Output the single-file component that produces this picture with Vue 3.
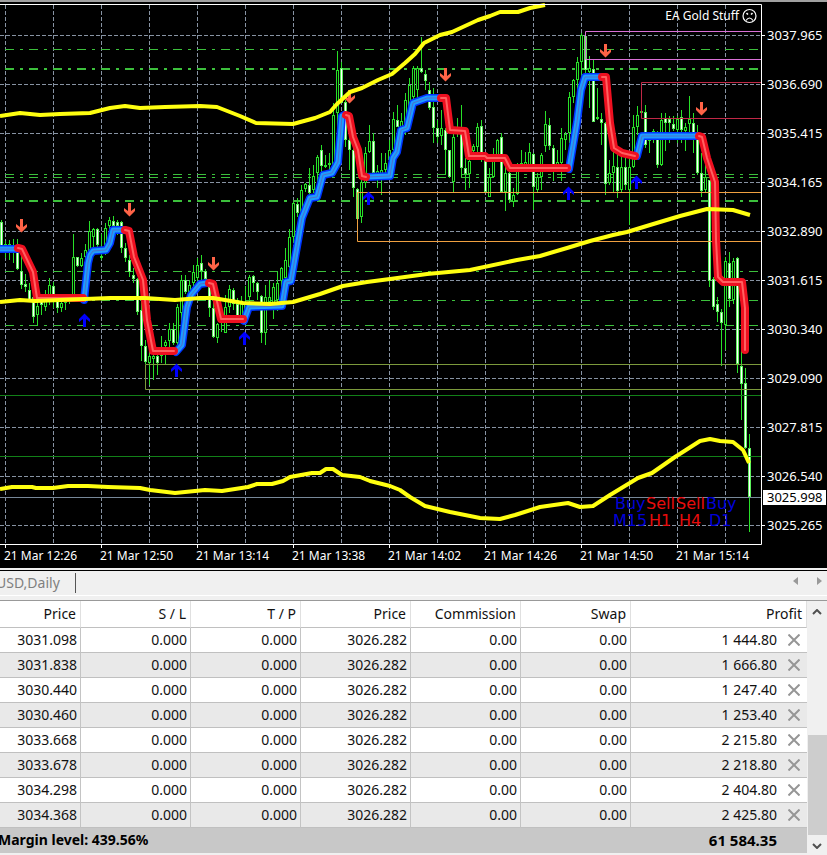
<script setup>
const gridX = Array.from({ length: 16 }, (_, i) => 5 + i * 48)

const prices = [
  '3037.965', '3036.690', '3035.415', '3034.165', '3032.890', '3031.615',
  '3030.340', '3029.090', '3027.815', '3026.540', '3025.265',
].map((label, i) => ({ label, y: 35 + i * 49 }))

const times = [
  '12:26', '12:50', '13:14', '13:38', '14:02', '14:26', '14:50', '15:14',
].map((t, i) => ({ label: `21 Mar ${t}`, x: 5 + i * 96 }))

// One bar every 4px: [high, low, body top, body bottom, falling]
const bars = [
  [220, 248, 222, 247, 1], [241, 258, 244, 250, 0], [240, 260, 244, 249, 0], [239, 263, 245, 250, 0],
  [239, 270, 250, 269, 1], [252, 289, 271, 285, 1], [274, 292, 284, 287, 1], [283, 302, 290, 300, 1],
  [294, 323, 297, 317, 1], [299, 326, 306, 315, 0], [297, 315, 301, 305, 1], [290, 311, 295, 307, 0],
  [278, 305, 285, 297, 0], [282, 308, 286, 299, 1], [295, 313, 301, 308, 1], [300, 312, 303, 308, 0],
  [298, 310, 301, 303, 0], [296, 304, 298, 300, 0], [234, 300, 257, 295, 0], [257, 267, 257, 266, 1],
  [253, 267, 258, 266, 0], [244, 260, 250, 257, 0], [221, 257, 231, 252, 0], [228, 250, 229, 237, 0],
  [228, 250, 229, 245, 1], [234, 260, 256, 258, 0], [223, 255, 228, 245, 0], [217, 238, 220, 226, 0],
  [216, 230, 221, 226, 1], [220, 235, 222, 226, 1], [221, 253, 222, 248, 1], [243, 262, 248, 258, 1],
  [255, 277, 260, 272, 1], [268, 283, 275, 279, 1], [278, 315, 279, 312, 1], [297, 361, 310, 346, 1],
  [340, 364, 346, 362, 1], [350, 385, 356, 363, 0], [348, 380, 356, 359, 0], [350, 375, 356, 363, 1],
  [336, 363, 348, 356, 0], [340, 364, 342, 346, 0], [323, 350, 329, 341, 0], [323, 345, 329, 343, 1],
  [304, 346, 307, 343, 0], [275, 323, 280, 313, 0], [275, 294, 280, 292, 1], [280, 303, 285, 295, 0],
  [265, 290, 272, 283, 0], [258, 290, 265, 278, 0], [255, 285, 263, 271, 1], [269, 284, 271, 279, 1],
  [283, 317, 287, 308, 1], [290, 338, 308, 337, 1], [323, 343, 324, 338, 0], [310, 332, 318, 323, 0],
  [295, 333, 307, 333, 0], [285, 313, 289, 307, 0], [288, 310, 290, 304, 1], [298, 322, 304, 317, 1],
  [296, 320, 304, 318, 0], [286, 314, 302, 311, 0], [275, 305, 277, 297, 0], [275, 292, 276, 283, 1],
  [282, 300, 283, 292, 1], [295, 343, 296, 333, 1], [285, 345, 297, 333, 0], [280, 307, 297, 302, 0],
  [283, 319, 287, 303, 0], [272, 311, 283, 300, 0], [267, 287, 268, 281, 0], [248, 280, 260, 278, 0],
  [229, 268, 237, 267, 0], [202, 243, 203, 237, 0], [198, 217, 204, 213, 1], [185, 215, 190, 212, 0],
  [183, 192, 184, 189, 0], [168, 203, 185, 193, 1], [165, 193, 176, 190, 0], [155, 187, 157, 173, 0],
  [145, 176, 150, 166, 1], [155, 168, 165, 167, 0], [153, 170, 163, 165, 0], [103, 170, 115, 166, 0],
  [51, 130, 70, 113, 0], [62, 103, 68, 103, 1], [100, 147, 102, 140, 1], [135, 170, 140, 150, 1],
  [147, 197, 150, 188, 1], [188, 220, 189, 219, 1], [177, 223, 182, 217, 0], [147, 188, 153, 183, 0],
  [125, 153, 141, 152, 0], [133, 176, 141, 173, 1], [165, 188, 171, 174, 0], [153, 195, 170, 176, 0],
  [153, 173, 163, 170, 0], [140, 173, 150, 160, 0], [112, 153, 119, 150, 0], [105, 127, 120, 127, 1],
  [113, 145, 121, 130, 0], [93, 135, 100, 127, 0], [78, 120, 85, 113, 0], [66, 110, 68, 97, 0],
  [66, 105, 68, 90, 0], [37, 73, 68, 72, 1], [70, 90, 74, 81, 1], [82, 110, 90, 108, 1],
  [88, 143, 107, 128, 1], [120, 143, 128, 137, 1], [110, 145, 128, 136, 0], [128, 175, 130, 150, 1],
  [150, 178, 150, 177, 1], [133, 192, 137, 182, 0], [118, 137, 128, 134, 0], [105, 177, 133, 168, 1],
  [158, 190, 168, 174, 1], [155, 188, 161, 174, 0], [144, 160, 146, 151, 0], [123, 153, 127, 147, 0],
  [120, 162, 126, 157, 1], [155, 193, 157, 192, 1], [168, 197, 177, 197, 0], [148, 178, 157, 177, 0],
  [139, 160, 140, 155, 0], [133, 193, 137, 192, 1], [163, 211, 173, 192, 0], [172, 203, 173, 200, 1],
  [188, 207, 195, 202, 0], [163, 195, 170, 194, 0], [150, 172, 163, 168, 0], [152, 170, 162, 167, 0],
  [143, 170, 152, 165, 0], [153, 210, 154, 187, 1], [173, 193, 177, 190, 0], [153, 190, 155, 177, 0],
  [111, 152, 124, 146, 0], [118, 150, 125, 146, 1], [145, 181, 148, 168, 1], [150, 172, 162, 166, 0],
  [128, 181, 138, 163, 0], [132, 150, 134, 140, 0], [92, 143, 97, 133, 0], [79, 103, 80, 97, 0],
  [57, 100, 62, 80, 0], [33, 80, 35, 62, 0], [33, 77, 36, 70, 1], [56, 108, 68, 72, 0],
  [60, 122, 69, 122, 1], [88, 120, 117, 119, 0], [113, 145, 119, 123, 1], [122, 195, 123, 184, 1],
  [160, 185, 173, 183, 0], [142, 192, 166, 173, 0], [155, 198, 167, 191, 1], [157, 193, 167, 190, 0],
  [157, 190, 167, 185, 1], [158, 225, 167, 190, 0], [115, 168, 127, 167, 0], [106, 135, 115, 127, 0],
  [108, 118, 111, 112, 0], [105, 148, 112, 145, 1], [137, 153, 139, 141, 0], [129, 143, 131, 133, 0],
  [131, 168, 132, 165, 1], [113, 166, 120, 165, 0], [113, 151, 118, 123, 1], [116, 143, 119, 123, 1],
  [116, 131, 124, 129, 1], [116, 143, 119, 130, 0], [110, 143, 117, 130, 1], [123, 151, 127, 131, 0],
  [96, 133, 119, 124, 0], [113, 153, 123, 137, 1], [125, 175, 137, 173, 1], [153, 197, 173, 191, 1],
  [150, 193, 177, 190, 0], [180, 287, 180, 281, 1], [277, 310, 279, 307, 1], [297, 322, 304, 312, 1],
  [309, 366, 312, 323, 1], [257, 350, 261, 325, 0], [252, 307, 263, 299, 1], [258, 304, 261, 300, 0],
  [257, 373, 258, 364, 1], [350, 420, 366, 384, 1], [368, 449, 383, 448, 1], [434, 532, 448, 497, 1],
].map(([high, low, top, bottom, falling], i) => ({ x: 1 + i * 4, high, low, top, bottom, falling }))

const levels = [
  { y: 49, thick: false }, { y: 69, thick: true }, { y: 174, thick: false }, { y: 177, thick: false },
  { y: 201, thick: true }, { y: 271, thick: false }, { y: 300, thick: false }, { y: 325, thick: false },
]

const trend = [
  { side: 'up', points: '0,249 18,249' },
  { side: 'up', points: '84,300 88,263 90,255 93,251 106,250 110,243 113,230 124,230' },
  { side: 'up', points: '176,352 182,345 187,307 191,295 200,284 207,283' },
  { side: 'up', points: '244,321 249,307 282,306 286,282 291,281 302,218 310,198 317,197 323,175 332,173 338,162 342,116 344,115' },
  { side: 'up', points: '367,177 390,176 393,158 397,152 401,130 407,128 413,103 427,98 440,98' },
  { side: 'up', points: '569,169 577,122 581,90 585,77 600,77' },
  { side: 'up', points: '637,156 642,136 697,136' },
  { side: 'down', points: '18,248 22,249 33,272 37,298 83,298' },
  { side: 'down', points: '125,230 129,231 134,257 143,280 147,320 153,351 174,351' },
  { side: 'down', points: '209,283 213,284 221,319 243,319' },
  { side: 'down', points: '346,115 349,116 353,137 358,150 362,176 366,177' },
  { side: 'down', points: '441,98 446,98 450,130 465,131 469,156 485,156 487,158 505,158 510,168 567,168' },
  { side: 'down', points: '602,77 606,77 610,123 614,148 622,153 635,156' },
  { side: 'down', points: '699,136 702,137 707,158 715,182 716,240 718,277 723,282 742,282 745,308 745,350' },
]

const bands = [
  '0,116 20,113 40,115 60,114 90,113 110,108 125,106 140,108 165,107 200,106 217,107 240,116 256,123 293,124 315,118 330,112 337,104 350,92 362,88 378,80 392,74 405,63 415,54 424,43 440,35 452,32 465,26 478,20 490,16 500,12 518,12 530,8 545,5',
  '0,302 20,300 35,301 60,300 85,299 110,298 145,298 175,300 200,298 213,298 243,303 270,304 293,302 320,294 343,286 367,282 390,279 427,274 470,270 517,260 540,256 567,248 590,241 613,235 627,232 650,225 680,216 707,209 733,210 750,215',
  '0,489 12,487 32,487 36,488 53,488 68,486 88,486 108,487 140,488 150,490 175,493 205,490 222,491 248,487 257,484 272,484 283,481 290,477 312,473 320,473 326,469 333,469 342,475 360,477 370,481 390,486 400,490 410,497 425,506 450,512 480,518 500,519 515,515 540,507 568,503 580,507 593,506 610,495 638,478 652,473 675,457 700,441 710,439 720,441 733,442 743,450 749,463',
]

const arrows = [
  { dir: 'down', x: 21, y: 219 }, { dir: 'down', x: 129, y: 203 }, { dir: 'down', x: 213, y: 257 },
  { dir: 'down', x: 349, y: 90 }, { dir: 'down', x: 445, y: 68 }, { dir: 'down', x: 605, y: 44 },
  { dir: 'down', x: 701, y: 102 },
  { dir: 'up', x: 84, y: 314 }, { dir: 'up', x: 176, y: 364 }, { dir: 'up', x: 244, y: 332 },
  { dir: 'up', x: 368, y: 192 }, { dir: 'up', x: 568, y: 187 }, { dir: 'up', x: 636, y: 176 },
]

const signals = [
  { frame: 'M15', side: 'Buy', x: 615, fx: 613 },
  { frame: 'H1', side: 'Sell', x: 646, fx: 649 },
  { frame: 'H4', side: 'Sell', x: 676, fx: 679 },
  { frame: 'D1', side: 'Buy', x: 706, fx: 709 },
]

const headings = ['Price', 'S / L', 'T / P', 'Price', 'Commission', 'Swap', 'Profit']
const orders = [
  ['3031.098', '1 444.80'], ['3031.838', '1 666.80'], ['3030.440', '1 247.40'], ['3030.460', '1 253.40'],
  ['3033.668', '2 215.80'], ['3033.678', '2 218.80'], ['3034.298', '2 404.80'], ['3034.368', '2 425.80'],
].map(([open, profit]) => ({ cells: [open, '0.000', '0.000', '3026.282', '0.00', '0.00'], profit }))
</script>

<template>
  <main class="terminal">
    <svg class="chart" viewBox="0 0 827 568" role="img" aria-label="EA Gold Stuff">
      <rect width="827" height="568" fill="#000" />
      <rect width="827" height="2" fill="#a0a0a0" />

      <g class="grid">
        <line v-for="x in gridX" :key="'x' + x" :x1="x + 0.5" y1="5" :x2="x + 0.5" y2="544" />
        <line v-for="p in prices" :key="p.label" x1="0" :y1="p.y + 0.5" x2="761" :y2="p.y + 0.5" />
      </g>

      <line
        v-for="l in levels" :key="l.y" class="level" x1="5" x2="759"
        :y1="l.thick ? l.y : l.y + 0.5" :y2="l.thick ? l.y : l.y + 0.5" :stroke-width="l.thick ? 2 : 1"
      />

      <g class="bars">
        <g v-for="b in bars" :key="b.x">
          <rect :x="b.x" :y="b.high" width="1" :height="b.low - b.high" class="wick" />
          <rect
            :x="b.x - 0.5" :y="b.top + 0.5" width="2" :height="Math.max(b.bottom - b.top - 1, 1)"
            :class="b.falling ? 'falling' : 'rising'"
          />
        </g>
      </g>

      <g fill="none">
        <path d="M761 395.5H0M761 456.5H0" stroke="#128018" />
        <path d="M761 497.5H0" stroke="#778899" />
        <path d="M761 364.5H145.5V389.5H761" stroke="#7c9a3c" />
        <path d="M761 192.5H357.5V241.5H761" stroke="#f0a040" />
        <path d="M761 31.5H585.5V59.5H761" stroke="#da70d6" />
        <path d="M761 82.5H641.5V118.5H761" stroke="#c02846" />
      </g>

      <g v-for="a in arrows" :key="a.x" :class="['arrow', a.dir]">
        <path
          v-if="a.dir === 'down'"
          :d="`M${a.x - 1} ${a.y}h3v8l4 -3v3l-5.500 5.500l-5.500 -5.500v-3l4 3z`"
        />
        <path v-else :d="`M${a.x - 1} ${a.y + 13}h3v-8l4 3v-3l-5.500 -5.500l-5.500 5.500v3l4 -3z`" />
      </g>

      <g class="trend">
        <g v-for="t in trend" :key="t.points" :class="t.side">
          <polyline class="edge" :points="t.points" />
          <polyline class="fill" :points="t.points" />
          <polyline class="core" :points="t.points" />
        </g>
      </g>

      <polyline v-for="b in bands" :key="b" class="band" :points="b" />

      <path d="M0 4.5H761.500V544.500H0" fill="none" stroke="#fff" />
      <g stroke="#fff">
        <line v-for="p in prices" :key="p.label" x1="762" x2="765" :y1="p.y + 0.5" :y2="p.y + 0.5" />
        <line v-for="t in times" :key="t.label" :x1="t.x + 0.5" :x2="t.x + 0.5" y1="545" y2="548" />
      </g>

      <g class="axis">
        <text v-for="t in times" :key="t.label" :x="t.x - 1" y="560">{{ t.label }}</text>
        <text x="739" y="20" text-anchor="end">EA Gold Stuff</text>
      </g>
      <g class="axis scale">
        <text v-for="p in prices" :key="p.label" x="767" :y="p.y + 5">{{ p.label }}</text>
      </g>

      <rect x="763" y="490" width="63" height="15" fill="#fff" />
      <text class="scale current" x="767" y="502">3025.998</text>

      <g fill="none" stroke="#fff" stroke-width="1.200">
        <circle cx="749.500" cy="16" r="6.500" />
        <path d="M746 20.500Q749.500 15.500 753 20.500" />
        <path d="M746.500 13.200L748 14.500M752.500 13.200L751 14.500" stroke-width="1.600" />
      </g>

      <g v-for="s in signals" :key="s.frame" :class="['signal', s.side.toLowerCase()]">
        <text :x="s.x" y="509">{{ s.side }}</text>
        <text :x="s.fx" y="526">{{ s.frame }}</text>
      </g>
    </svg>

    <nav class="tabs">
      <a class="tab" href="#">USD,Daily</a>
      <span class="scrollers">
        <button type="button" aria-label="Previous tab"><svg viewBox="0 0 5 8"><path d="M5 0V8L0 4z" /></svg></button>
        <button type="button" aria-label="Next tab"><svg viewBox="0 0 5 8"><path d="M0 0V8L5 4z" /></svg></button>
      </span>
    </nav>

    <section class="orders">
      <table>
        <colgroup>
          <col class="first"><col class="mid"><col class="mid"><col class="mid"><col class="mid"><col class="mid"><col>
        </colgroup>
        <thead>
          <tr><th v-for="(h, i) in headings" :key="i" scope="col">{{ h }}</th></tr>
        </thead>
        <tbody>
          <tr v-for="o in orders" :key="o.cells[0]">
            <td v-for="(c, i) in o.cells" :key="i">{{ c }}</td>
            <td>
              <span class="profit">
                {{ o.profit }}
                <button type="button" aria-label="Close order">
                  <svg viewBox="0 0 12 12"><path d="M0.500 0.500L11.500 11.500M11.500 0.500L0.500 11.500" /></svg>
                </button>
              </span>
            </td>
          </tr>
        </tbody>
        <tfoot>
          <tr><td colspan="6" class="margin">Margin level: 439.56%</td><td class="total">61 584.35</td></tr>
        </tfoot>
      </table>
      <div class="scrollbar">
        <button type="button" aria-label="Scroll up"><svg viewBox="0 0 10 6"><path d="M1 5L5 1L9 5" /></svg></button>
        <div class="track"><div class="thumb"></div></div>
        <button type="button" aria-label="Scroll down"><svg viewBox="0 0 10 6"><path d="M1 1L5 5L9 1" /></svg></button>
      </div>
    </section>
  </main>
</template>

<style>
body {
  margin: 0;
  background: #f0f0f0;
}
</style>

<style scoped>
.terminal {
  overflow: hidden;
  font: 14px/20px "Noto Sans", "Open Sans", sans-serif;
  color: #111;
}
.chart {
  display: block;
  width: 100%;
}
.grid line {
  stroke: #8793a3;
  stroke-dasharray: 4 2;
}
.level {
  stroke: #3cc03c;
  stroke-dasharray: 9 6 3 6;
}
.wick {
  fill: #28e028;
}
.rising {
  fill: #000;
  stroke: #28e028;
}
.falling {
  fill: #fff;
  stroke: #5cf05c;
}
.arrow.down {
  fill: #ff6347;
}
.arrow.up {
  fill: #0000ff;
}
.trend polyline {
  fill: none;
  stroke-linejoin: round;
  stroke-linecap: round;
}
.trend .edge {
  stroke-width: 8;
}
.trend .fill {
  stroke-width: 5;
}
.trend .core {
  stroke-width: 2;
}
.up .edge {
  stroke: #0034ff;
}
.up .fill {
  stroke: #1e9cff;
}
.trend .up .core {
  stroke: #5070c8;
  stroke-width: 1;
}
.down .edge,
.down .fill {
  stroke: #ee1020;
}
.down .core {
  stroke: #ff6060;
}
.band {
  fill: none;
  stroke: #ffff10;
  stroke-width: 4;
  stroke-linejoin: round;
}
.axis {
  fill: #fff;
  font-size: 12px;
}
.scale {
  font-size: 13px;
}
.current {
  fill: #000;
}
.signal {
  font-family: "DejaVu Sans", sans-serif;
  font-size: 16px;
}
.signal.buy {
  fill: #0000d8;
}
.signal.sell {
  fill: #e80c0c;
}
button {
  display: flex;
  align-items: center;
  justify-content: center;
  padding: 0;
  border: 0;
  background: none;
}
.tabs {
  display: flex;
  align-items: flex-start;
  justify-content: space-between;
  box-sizing: border-box;
  height: 26px;
  margin-top: 2px;
  padding: 2px 5px 0 0;
  border-top: 1px solid #000;
  border-bottom: 1px solid #fff;
}
.tab {
  margin-left: -4px;
  padding-right: 15px;
  border-right: 1px solid #555;
  color: #808080;
  text-decoration: none;
}
.scrollers {
  display: flex;
  gap: 19px;
  padding-top: 4px;
}
.scrollers svg {
  width: 5px;
  height: 8px;
  fill: #999;
}
.orders {
  display: flex;
  margin-top: 4px;
  border-top: 1px solid #999;
}
table {
  flex: 1;
  margin-bottom: 3px;
  border-collapse: separate;
  border-spacing: 0;
  table-layout: fixed;
  background: #fff;
}
.first {
  width: 81px;
}
.mid {
  width: 110px;
}
th,
td {
  box-sizing: border-box;
  height: 25px;
  padding: 0 3px 0 0;
  border-right: 1px solid #c4c4c4;
  border-bottom: 1px solid #c0c0c0;
  text-align: right;
  font-weight: 400;
}
th {
  height: 27px;
  padding-right: 4px;
  border-right-color: #e0e0e0;
}
td:last-child {
  padding-right: 7px;
  border-right: 0;
}
tbody tr:nth-child(even) {
  background: #e9e9e9;
}
.profit {
  display: flex;
  align-items: center;
  justify-content: flex-end;
  gap: 11px;
}
.profit svg {
  width: 12px;
  height: 12px;
  fill: none;
  stroke: #969696;
  stroke-width: 2;
}
tfoot td {
  padding-bottom: 2px;
  border: 0;
  background: #c8c8c8;
  color: #000;
  font-weight: 700;
}
tfoot .margin {
  text-align: left;
  text-indent: -2px;
}
tfoot td.total {
  padding-right: 30px;
  font-size: 15px;
}
.scrollbar {
  display: flex;
  flex-direction: column;
  width: 20px;
  background: #f0f0f0;
}
.scrollbar button {
  height: 21px;
}
.scrollbar svg {
  width: 10px;
  height: 6px;
  fill: none;
  stroke: #505050;
  stroke-width: 2;
}
.track {
  display: flex;
  flex: 1;
  flex-direction: column;
  justify-content: flex-end;
  padding-left: 1px;
}
.thumb {
  height: 47%;
  background: #cdcdcd;
}
</style>
